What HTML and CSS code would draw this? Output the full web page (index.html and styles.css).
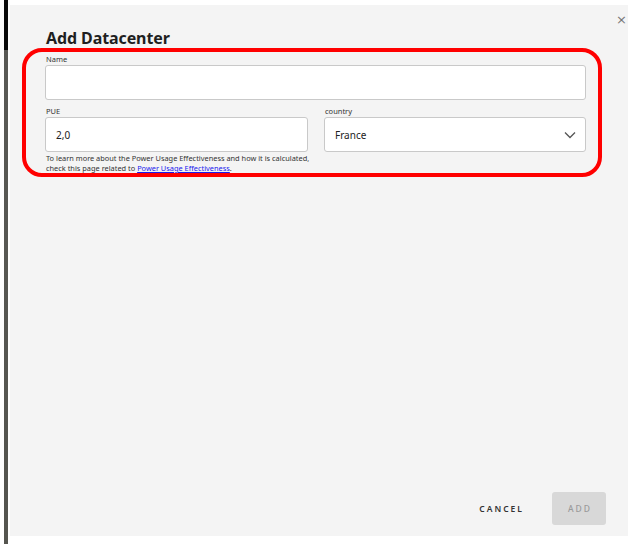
FILE: index.html
```html
<!DOCTYPE html>
<html lang="en">
<head>
<meta charset="utf-8">
<title>Add Datacenter</title>
<link rel="stylesheet" href="styles.css">
</head>
<body>
<div class="page">
  <div class="edge"></div>
  <div class="modal">
    <button class="close" aria-label="Close">×</button>
    <h1 class="title">Add Datacenter</h1>
    <div class="form">
      <div class="field">
        <label class="label">Name</label>
        <div class="input"></div>
      </div>
      <div class="row">
        <div class="field">
          <label class="label">PUE</label>
          <div class="input"><span class="value">2,0</span></div>
          <p class="help">To learn more about the Power Usage Effectiveness and how it is calculated, <br>check this page related to <a href="#">Power Usage Effectiveness</a>.</p>
        </div>
        <div class="field">
          <label class="label">country</label>
          <div class="input select"><span class="value">France</span>
            <svg class="chevron" width="12" height="8" viewBox="0 0 12 8"><path d="M1 1.5 L6 6.5 L11 1.5" fill="none" stroke="#555" stroke-width="1.3"/></svg>
          </div>
        </div>
      </div>
      <div class="highlight"></div>
    </div>
    <div class="spacer"></div>
    <div class="footer">
      <button class="btn cancel">CANCEL</button>
      <button class="btn add">ADD</button>
    </div>
  </div>
</div>
</body>
</html>
```

FILE: styles.css
```css
* { box-sizing: border-box; }
html, body { margin: 0; padding: 0; background: #fff; }
body { font-family: "Noto Sans", "Liberation Sans", sans-serif; color: #222; }

.page {
  display: flex;
  height: 544px;
  width: 628px;
  overflow: hidden;
}
.edge {
  width: 4px;
  margin-left: 4px;
  margin-right: 2px;
  background: linear-gradient(#0b0b0b 0, #0b0b0b 50px, #5a5a56 50px, #55554f 100%);
}
.modal {
  position: relative;
  flex: 1;
  margin-top: 5px;
  height: 531px;
  background: #f4f4f4;
  padding: 0 42px 0 35px;
  display: flex;
  flex-direction: column;
}
.close {
  position: absolute;
  right: 1px;
  top: 7px;
  border: 0;
  background: none;
  color: #777;
  font-size: 13px;
  padding: 0;
  font-family: "DejaVu Sans", sans-serif;
  line-height: 16px;
}
.title {
  margin: 22px 0 0 1px;
  font-size: 16px;
  line-height: 22px;
  font-weight: 700;
  color: #1f1f1f;
  letter-spacing: -0.1px;
}
.form {
  position: relative;
  margin-top: 6px;
}
.field { display: flex; flex-direction: column; }
.label {
  font-size: 7.5px;
  line-height: 9px;
  color: #333;
  margin: 0 0 1px 1px;
}
.input {
  height: 35px;
  background: #fff;
  border: 1px solid #c9c9c9;
  border-radius: 3px;
  display: flex;
  align-items: center;
  padding: 0 10px;
}
.value { font-size: 10px; color: #222; }
.select { justify-content: space-between; }
.chevron { margin-right: -1px; }
.row {
  display: grid;
  grid-template-columns: 263px 262px;
  column-gap: 16px;
  margin-top: 7px;
}
.help {
  margin: 1px 0 0 1px;
  font-size: 7.4px;
  line-height: 10px;
  color: #333;
  white-space: nowrap;
}
.help a { color: #1a1aee; text-decoration: underline; }
.highlight {
  position: absolute;
  left: -23px;
  top: -7px;
  width: 580px;
  height: 129px;
  border: 4.5px solid #f00;
  border-radius: 20px;
  pointer-events: none;
}
.spacer { flex: 1; }
.footer {
  display: flex;
  justify-content: flex-end;
  align-items: center;
  gap: 28px;
  margin-right: -20px;
  margin-bottom: 11px;
}
.btn {
  font-family: "Noto Sans", "Liberation Sans", sans-serif;
  font-size: 8.5px;
  font-weight: 600;
  letter-spacing: 2px;
  border: 0;
  background: none;
  padding: 0;
}
.cancel { color: #333; }
.add {
  width: 54px;
  height: 33px;
  background: #d8d8d8;
  color: #9a9a9a;
  border-radius: 3px;
  font-weight: 500;
  padding-left: 2px;
}
```
